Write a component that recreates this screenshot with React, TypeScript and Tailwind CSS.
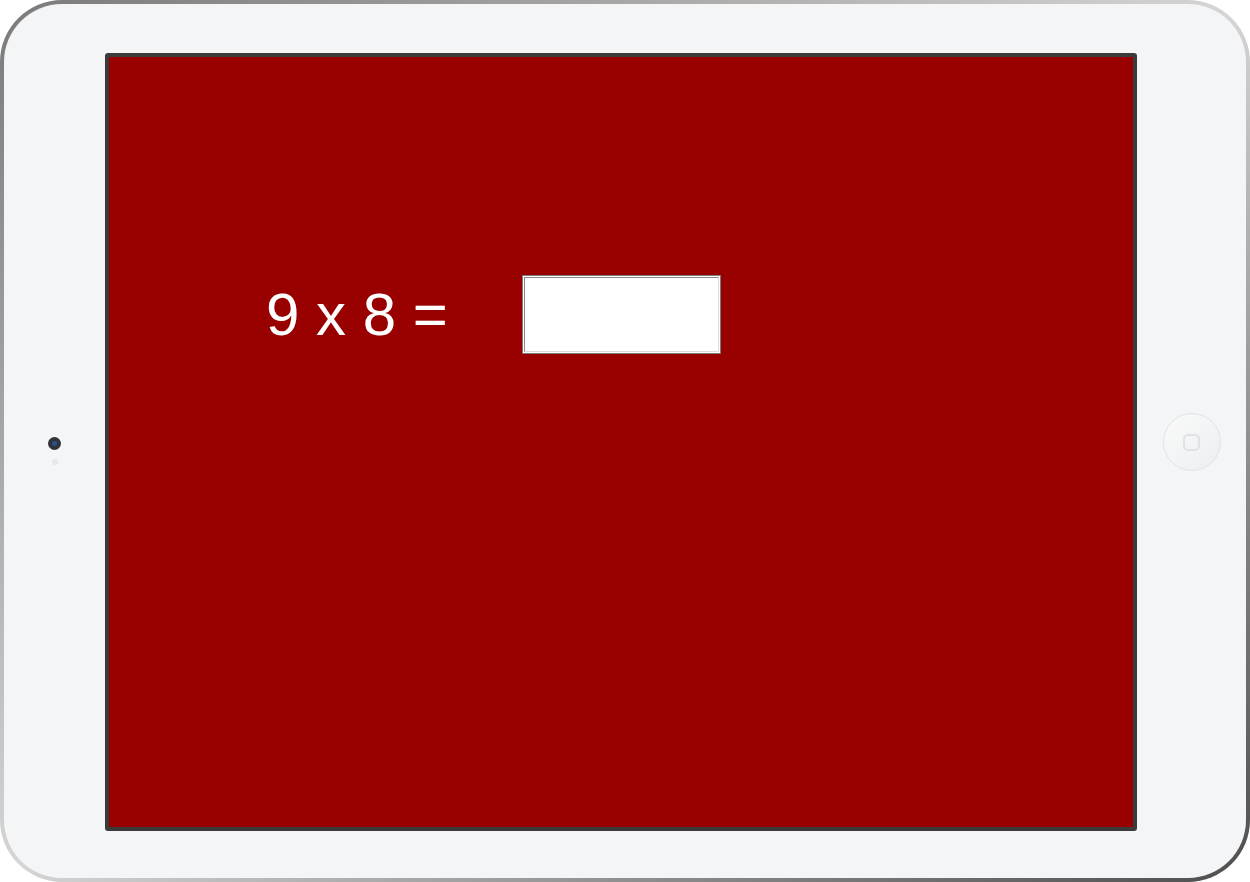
import React from "react";

export default function App() {
  return (
    <div className="w-[1250px] h-[882px] bg-white">
      <div className="w-full h-full rounded-[62px] p-[4px] bg-gradient-to-br from-[#7a7a7a] via-[#d6d6d6] to-[#4e4e4e]">
        <div className="w-full h-full rounded-[58px] bg-[#f4f5f7] flex pt-[49px] pb-[47px]">
          {/* left bezel with camera */}
          <div className="w-[101px] flex flex-col items-center justify-center">
            <div className="mt-[18px] w-[13px] h-[13px] rounded-full bg-[#2f343b] flex items-center justify-center">
              <div className="w-[5px] h-[5px] rounded-full bg-[#2a4f8f]" />
            </div>
            <div className="mt-[9px] w-[6px] h-[6px] rounded-full bg-[#e6e7ea]" />
          </div>

          {/* screen */}
          <div className="w-[1032px] border-4 border-[#3b3b3b] rounded-[3px] bg-[#990000]">
            <div className="flex items-center pt-[218px] pl-[157px] gap-[74px]">
              <span
                className="text-white text-[60px] leading-none"
                style={{ fontFamily: '"Liberation Sans", Arial, sans-serif' }}
              >
                9 x 8 =
              </span>
              <div className="w-[199px] h-[79px] bg-white border border-[#7a7a7a] p-px">
                <div className="w-full h-full border border-t-[#8a8a8a] border-l-[#8a8a8a] border-r-[#dcdcdc] border-b-[#dcdcdc]" />
              </div>
            </div>
          </div>

          {/* right bezel with home button */}
          <div className="flex-1 flex items-center justify-center">
            <div className="w-[58px] h-[58px] rounded-full border border-[#e2e3e6] bg-gradient-to-br from-[#fafafa] to-[#eceef0] flex items-center justify-center">
              <div className="w-[17px] h-[17px] rounded-[5px] border-2 border-[#e0e1e4]" />
            </div>
          </div>
        </div>
      </div>
    </div>
  );
}
